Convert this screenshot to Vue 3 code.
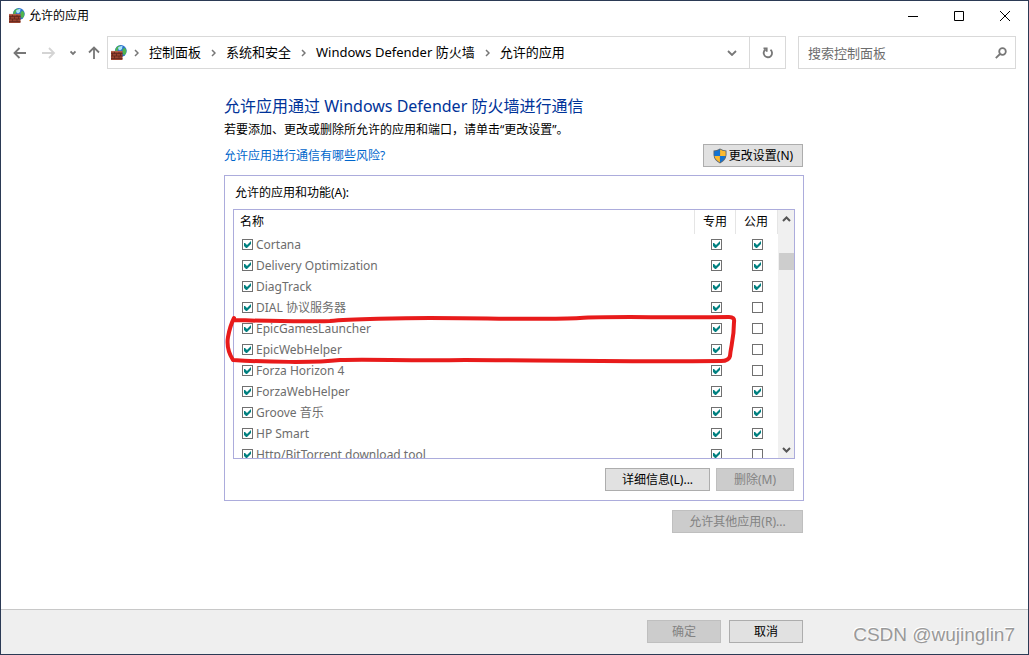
<script setup>
import { ref } from 'vue'

const crumbs = ['控制面板', '系统和安全', 'Windows Defender 防火墙', '允许的应用']
const apps = ref([
  { name: 'Cortana', priv: true, pub: true },
  { name: 'Delivery Optimization', priv: true, pub: true },
  { name: 'DiagTrack', priv: true, pub: true },
  { name: 'DIAL 协议服务器', priv: true, pub: false },
  { name: 'EpicGamesLauncher', priv: true, pub: false },
  { name: 'EpicWebHelper', priv: true, pub: false },
  { name: 'Forza Horizon 4', priv: true, pub: false },
  { name: 'ForzaWebHelper', priv: true, pub: true },
  { name: 'Groove 音乐', priv: true, pub: true },
  { name: 'HP Smart', priv: true, pub: true },
  { name: 'Http/BitTorrent download tool', priv: true, pub: false },
].map((a) => ({ ...a, on: true })))
</script>

<template>
  <div class="window">
    <svg class="defs" aria-hidden="true">
      <symbol id="firewall" viewBox="0 0 16 16">
        <circle cx="9.800" cy="6" r="5.900" fill="#2a6fd0" />
        <path d="M4.500 4Q6 .6 9.500 .4L9 2.500 7 4 6.500 6H4.200ZM11.500 4.500L13.500 2.500 15.400 5 15 8.500 13 10.500 11.500 8Z" fill="#4fb54e" />
        <path d="M7 2.500Q9 .6 11.500 1L11 4 9 5.500 7.500 4.500Z" fill="#a9e4f7" />
        <path d="M0 6h11.500v9H0z" fill="#98422f" />
        <path d="M0 8.500h11.500M0 11h11.500M0 13.500h11.500M3.500 6v2.500M8 6v2.500M1.500 8.500V11M5.500 8.500V11M9.500 8.500V11M3.500 11v2.500M8 11v2.500" stroke="#5a231b" stroke-width=".7" />
        <path d="M0 6.400h11.500" stroke="#c0705a" stroke-width=".8" />
      </symbol>
    </svg>

    <header class="titlebar">
      <svg class="app-icon"><use href="#firewall" /></svg>
      <h1>允许的应用</h1>
      <div class="controls">
        <button aria-label="最小化"><svg viewBox="0 0 10 10"><path d="M0 5.500h10" /></svg></button>
        <button aria-label="最大化"><svg viewBox="0 0 10 10"><path d="M.5.5h9v9h-9z" /></svg></button>
        <button aria-label="关闭"><svg viewBox="0 0 10 10"><path d="M0 0l10 10M10 0L0 10" /></svg></button>
      </div>
    </header>

    <nav class="navbar">
      <button class="back" aria-label="后退"><svg viewBox="0 0 14 12"><path d="M13 6H2M6.500 1L1.500 6l5 5" /></svg></button>
      <button class="forward" aria-label="前进"><svg viewBox="0 0 14 12"><path d="M0 6h11M7 1l5 5-5 5" /></svg></button>
      <button class="recent" aria-label="最近浏览的位置"><svg viewBox="0 0 6 6"><path d="M.5 1.500L3 4l2.500-2.500" /></svg></button>
      <button class="up" aria-label="上移"><svg viewBox="0 0 12 13"><path d="M6 13V2M1 6.500l5-5 5 5" /></svg></button>
      <div class="address">
        <svg class="app-icon"><use href="#firewall" /></svg>
        <template v-for="c in crumbs" :key="c">
          <svg class="sep" viewBox="0 0 5 8"><path d="M1 1l3 3-3 3" /></svg>
          <a href="#">{{ c }}</a>
        </template>
        <button class="drop" aria-label="以前的位置"><svg viewBox="0 0 10 6"><path d="M1 1l4 4 4-4" /></svg></button>
        <button class="refresh" aria-label="刷新"><svg viewBox="0 0 12 12"><path d="M8.500 2.800A4.200 4.200 0 1 1 3.500 2.600M1.500 1.300h3.200v3.400" /></svg></button>
      </div>
      <div class="search">
        <input type="text" placeholder="搜索控制面板" aria-label="搜索控制面板" />
        <svg viewBox="0 0 12 12"><circle cx="7.500" cy="4.500" r="3.300" /><path d="M5 7L.8 11.200" /></svg>
      </div>
    </nav>

    <main>
      <div class="page">
        <h2>允许应用通过 Windows Defender 防火墙进行通信</h2>
        <p>若要添加、更改或删除所允许的应用和端口，请单击“更改设置”。</p>
        <div class="risk">
          <a href="#">允许应用进行通信有哪些风险?</a>
          <button class="btn change">
            <svg viewBox="0 0 14 16">
              <path d="M7 .5Q10 2.500 13.500 2.500V7Q13 12.500 7 15.500Q1 12.500 .5 7V2.500Q4 2.500 7 .5Z" fill="#5c6670" />
              <path d="M6.900 1.600V8H1.400V3.300Q4.500 3.200 6.900 1.600ZM7.100 8h5.300Q11.800 12 7.100 14.400Z" fill="#1373d2" />
              <path d="M7.100 1.600Q9.500 3.200 12.600 3.300V8H7.100ZM1.500 8h5.400v6.400Q2.200 12 1.500 8Z" fill="#fcba2f" />
            </svg>更改设置(N)
          </button>
        </div>

        <section class="group">
          <h3 id="list-label">允许的应用和功能(A):</h3>
          <div class="list">
            <table aria-labelledby="list-label">
              <thead>
                <tr><th>名称</th><th class="col">专用</th><th class="col">公用</th></tr>
              </thead>
              <tbody>
                <tr v-for="a in apps" :key="a.name">
                  <td><label><input type="checkbox" v-model="a.on" />{{ a.name }}</label></td>
                  <td class="mark"><input type="checkbox" v-model="a.priv" :aria-label="a.name + ' 专用'" /></td>
                  <td class="mark"><input type="checkbox" v-model="a.pub" :aria-label="a.name + ' 公用'" /></td>
                </tr>
              </tbody>
            </table>
            <div class="scrollbar">
              <svg viewBox="0 0 9 6"><path d="M1 5l3.500-3.500L8 5" /></svg>
              <div class="track"><div class="thumb"></div></div>
              <svg viewBox="0 0 9 6"><path d="M1 1l3.500 3.500L8 1" /></svg>
            </div>
          </div>
          <div class="actions">
            <button class="btn details">详细信息(L)...</button>
            <button class="btn remove" disabled>删除(M)</button>
          </div>
          <svg class="scribble" viewBox="0 0 512 48" aria-hidden="true">
            <path d="M9 3C40 4 75 5 105 4 125 2 180 1 205 1 260 1 320 3 355 1 385 -1 440 1 504 0Q510 0 509 5C509 22 506 28 505 39Q504 44 496 44C380 45 300 43 240 43 180 44 150 42 115 43 90 46 40 45 8 43Q1 32 3 20Q5 9 9 1" />
          </svg>
        </section>

        <div class="other"><button class="btn" disabled>允许其他应用(R)...</button></div>
      </div>
    </main>

    <footer>
      <div class="page confirm">
        <button class="btn" disabled>确定</button>
        <button class="btn">取消</button>
      </div>
      <span class="watermark">CSDN @wujinglin7</span>
    </footer>
  </div>
</template>

<style>
body { margin: 0; }
</style>

<style scoped>
* { box-sizing: border-box; }
.window {
  min-height: 100vh;
  display: flex;
  flex-direction: column;
  border: 1px solid #2b3a55;
  background: #fff;
  color: #000;
  font: 12px/16px "Noto Sans", "Noto Sans CJK SC", sans-serif;
}
.defs { position: absolute; width: 0; height: 0; }
button { font: inherit; border: 0; padding: 0; background: none; display: flex; align-items: center; justify-content: center; }
svg { flex: none; fill: none; }
h1, h2, h3, p { margin: 0; font-weight: 400; font-size: 12px; }
a { text-decoration: none; color: inherit; }
.app-icon { width: 16px; height: 16px; }

.titlebar { display: flex; align-items: center; height: 29px; padding-left: 8px; }
.titlebar h1 { margin-left: 4px; flex: 1; }
.controls { display: flex; }
.controls button { width: 46px; height: 29px; }
.controls svg { width: 10px; height: 10px; stroke: #000; }

.navbar { display: flex; align-items: center; padding: 6px 12px 0; font-size: 13px; }
.navbar svg { stroke: #777; stroke-width: 1.800; }
.navbar .app-icon { stroke: none; }
.back svg, .forward svg { width: 14px; height: 12px; }
.navbar .forward { margin-left: 15px; }
.navbar .forward svg { stroke: #d4d4d4; }
.recent { margin-left: 14px; }
.recent svg { width: 6px; height: 6px; }
.up { margin: 0 7px 0 12px; }
.up svg { width: 12px; height: 13px; }
.address { flex: 1; display: flex; align-items: center; height: 33px; border: 1px solid #d9d9d9; padding-left: 3px; }
.address a { padding: 0 3px 2px 0; }
.sep { width: 5px; height: 8px; margin: 0 10px 0 7px; }
.address .sep { stroke-width: 1.500; }
.drop { margin-left: auto; width: 34px; height: 31px; }
.drop svg { width: 10px; height: 6px; }
.refresh { width: 36px; height: 31px; border-left: 1px solid #d9d9d9; }
.refresh svg { width: 12px; height: 12px; }
.search { display: flex; align-items: center; width: 218px; height: 33px; margin-left: 12px; padding: 0 8px 0 9px; border: 1px solid #d9d9d9; }
.search input { flex: 1; min-width: 0; border: 0; padding: 0; outline: 0; font: inherit; background: none; }
.search input::placeholder { color: #6d6d6d; opacity: 1; }
.search svg { width: 12px; height: 12px; }

main { flex: 1; padding: 25px 1px 20px 0; }
.page { width: 580px; max-width: 100%; margin: 0 auto; }
h2 { font-size: 16px; line-height: 24px; color: #003399; }
p { margin-top: 4px; }
.risk { display: flex; align-items: center; justify-content: space-between; margin-top: 6px; padding-right: 1px; }
.risk a { color: #0066cc; padding-top: 1px; }
.btn { height: 23px; border: 1px solid #adadad; background: #e1e1e1; color: #000; }
.btn:disabled { border-color: #bfbfbf; background: #ccc; color: #838383; }
.change { width: 100px; }
.change svg { width: 14px; height: 16px; margin-right: 2px; }

.group { position: relative; margin-top: 8px; padding: 8px 8px 9px; border: 1px solid #acacdc; }
h3 { padding-left: 2px; line-height: 17px; }
.list { display: flex; height: 250px; margin-top: 8px; border: 1px solid #acacdc; overflow: hidden; }
table { flex: 1; align-self: flex-start; border-collapse: separate; border-spacing: 0; table-layout: fixed; }
th { height: 24px; padding: 0 0 0 6px; text-align: left; font-weight: 400; }
th.col { width: 41px; padding: 0; text-align: center; border-left: 1px solid #e5e5e5; }
th.col:last-child { width: 43px; padding-right: 1px; border-right: 1px solid #e5e5e5; }
td { height: 21px; padding: 0 0 0 8px; color: #6d6d6d; }
td.mark { padding: 0 0 0 17px; }
td label { display: flex; align-items: center; gap: 3px; }
td input { appearance: none; display: block; flex: none; width: 11px; height: 11px; margin: 0; border: 1px solid #707070; background: #fff; }
td input:checked::before {
  content: "";
  display: block;
  width: 9px;
  height: 9px;
  background: #008080;
  clip-path: polygon(1px 3px, 2px 3px, 4px 5px, 8px 1px, 8px 4px, 4px 8px, 3px 8px, 1px 6px);
}
.scrollbar { width: 16px; display: flex; flex-direction: column; align-items: center; background: #f0f0f0; padding: 6px 0 5px; }
.scrollbar svg { width: 9px; height: 6px; stroke: #555; stroke-width: 2; }
.track { flex: 1; width: 15px; padding-top: 31px; }
.thumb { height: 17px; background: #cdcdcd; }
.actions { display: flex; justify-content: flex-end; gap: 6px; margin-top: 9px; padding-right: 1px; }
.details { width: 105px; }
.remove { width: 78px; }
.scribble { position: absolute; left: 0; top: 141px; width: 512px; height: 48px; stroke: #e81b1b; stroke-width: 4; stroke-linejoin: round; stroke-linecap: round; overflow: visible; pointer-events: none; }
.other { display: flex; justify-content: flex-end; margin-top: 9px; padding-right: 1px; }
.other .btn { width: 131px; }

footer { position: relative; padding: 10px 1px 11px 0; border-top: 1px solid #c8c8c8; background: #efefef; }
.confirm { display: flex; justify-content: flex-end; gap: 8px; padding-right: 1px; }
.confirm .btn { width: 74px; }
.watermark { position: absolute; right: 13px; bottom: 8px; font: 19px/22px "Liberation Sans", sans-serif; color: #999; text-shadow: -1px -1px 0 #fff; }
</style>
